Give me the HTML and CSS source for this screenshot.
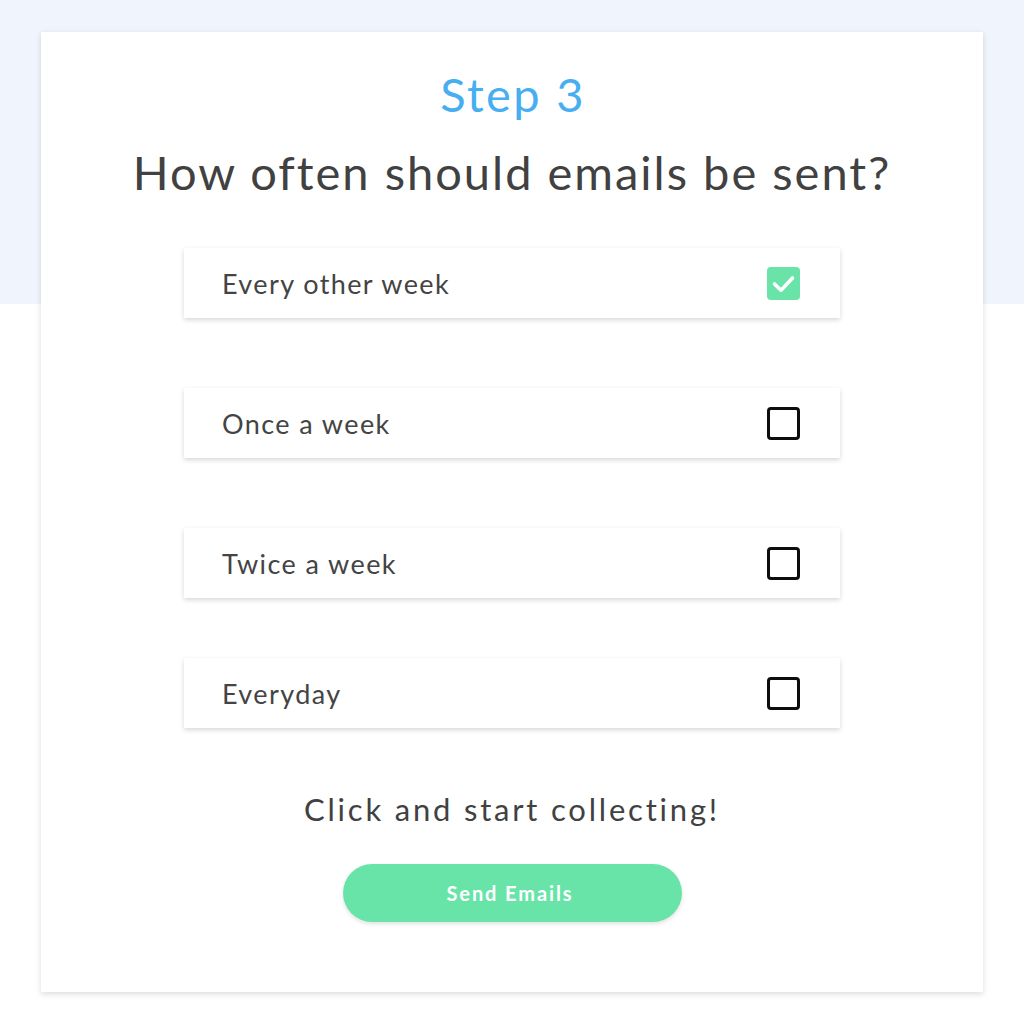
FILE: index.html
```html
<!DOCTYPE html>
<html lang="en">
<head>
<meta charset="utf-8">
<title>Step 3</title>
<link rel="stylesheet" href="styles.css">
</head>
<body>
<div class="band"></div>
<main class="card">
  <h2 class="step">Step 3</h2>
  <h1 class="question">How often should emails be sent?</h1>
  <ul class="options">
    <li class="option">
      <span class="label">Every other week</span>
      <span class="box checked">
        <svg viewBox="0 0 33 33" width="33" height="33"><path d="M7.5 17 L14 23.2 L25.5 11" fill="none" stroke="#fff" stroke-width="3.6" stroke-linecap="round" stroke-linejoin="round"/></svg>
      </span>
    </li>
    <li class="option"><span class="label">Once a week</span><span class="box"></span></li>
    <li class="option"><span class="label">Twice a week</span><span class="box"></span></li>
    <li class="option last"><span class="label">Everyday</span><span class="box"></span></li>
  </ul>
  <p class="cta">Click and start collecting!</p>
  <button class="send">Send Emails</button>
</main>
</body>
</html>
```
FILE: styles.css
```css
html, body {
  margin: 0;
  padding: 0;
  background: #ffffff;
}
body {
  position: relative;
  font-family: Lato, "Open Sans", sans-serif;
  color: #414141;
  padding-top: 32px;
  padding-bottom: 32px;
}
.band {
  position: absolute;
  left: 0;
  top: 0;
  width: 100%;
  height: 304px;
  background: #f0f5fd;
  z-index: 0;
}
.card {
  position: relative;
  z-index: 1;
  width: 942px;
  height: 960px;
  margin: 0 auto 0 41px;
  background: #fff;
  box-shadow: 0 2px 6px rgba(0, 0, 0, 0.14);
  display: flex;
  flex-direction: column;
  align-items: center;
  box-sizing: border-box;
  padding-top: 34px;
}
.step {
  margin: 0;
  font-weight: 400;
  font-size: 47px;
  line-height: 56px;
  color: #48aef2;
  letter-spacing: 2.3px;
  padding-left: 2px;
}
.question {
  margin: 22px 0 0;
  font-weight: 400;
  font-size: 47px;
  line-height: 56px;
  color: #414141;
  letter-spacing: 2px;
}
.options {
  list-style: none;
  margin: 48px 0 0;
  padding: 0;
  display: flex;
  flex-direction: column;
  gap: 70px;
}
.option {
  width: 656px;
  height: 70px;
  box-sizing: border-box;
  padding: 0 40px 0 38px;
  display: flex;
  align-items: center;
  justify-content: space-between;
  background: #fff;
  box-shadow: 0 2px 5px rgba(0, 0, 0, 0.16);
}
.option.last {
  margin-top: -10px;
}
.label {
  font-size: 27px;
  letter-spacing: 1.4px;
  color: #444;
}
.box {
  width: 33px;
  height: 33px;
  box-sizing: border-box;
  border: 3px solid #0d0d0d;
  border-radius: 4px;
  display: block;
}
.box.checked {
  border: none;
  background: #6ae3a8;
}
.box svg {
  display: block;
}
.cta {
  margin: 61px 0 0;
  font-size: 31px;
  line-height: 40px;
  letter-spacing: 2.8px;
  color: #414141;
}
.send {
  margin-top: 35px;
  width: 339px;
  height: 58px;
  border: none;
  border-radius: 29px;
  background: #68e4a9;
  color: #fff;
  font-family: Lato, "Open Sans", sans-serif;
  font-weight: 700;
  font-size: 20px;
  letter-spacing: 1.9px;
  padding-left: 2px;
  box-shadow: 0 2px 4px rgba(0, 0, 0, 0.12);
}
```
